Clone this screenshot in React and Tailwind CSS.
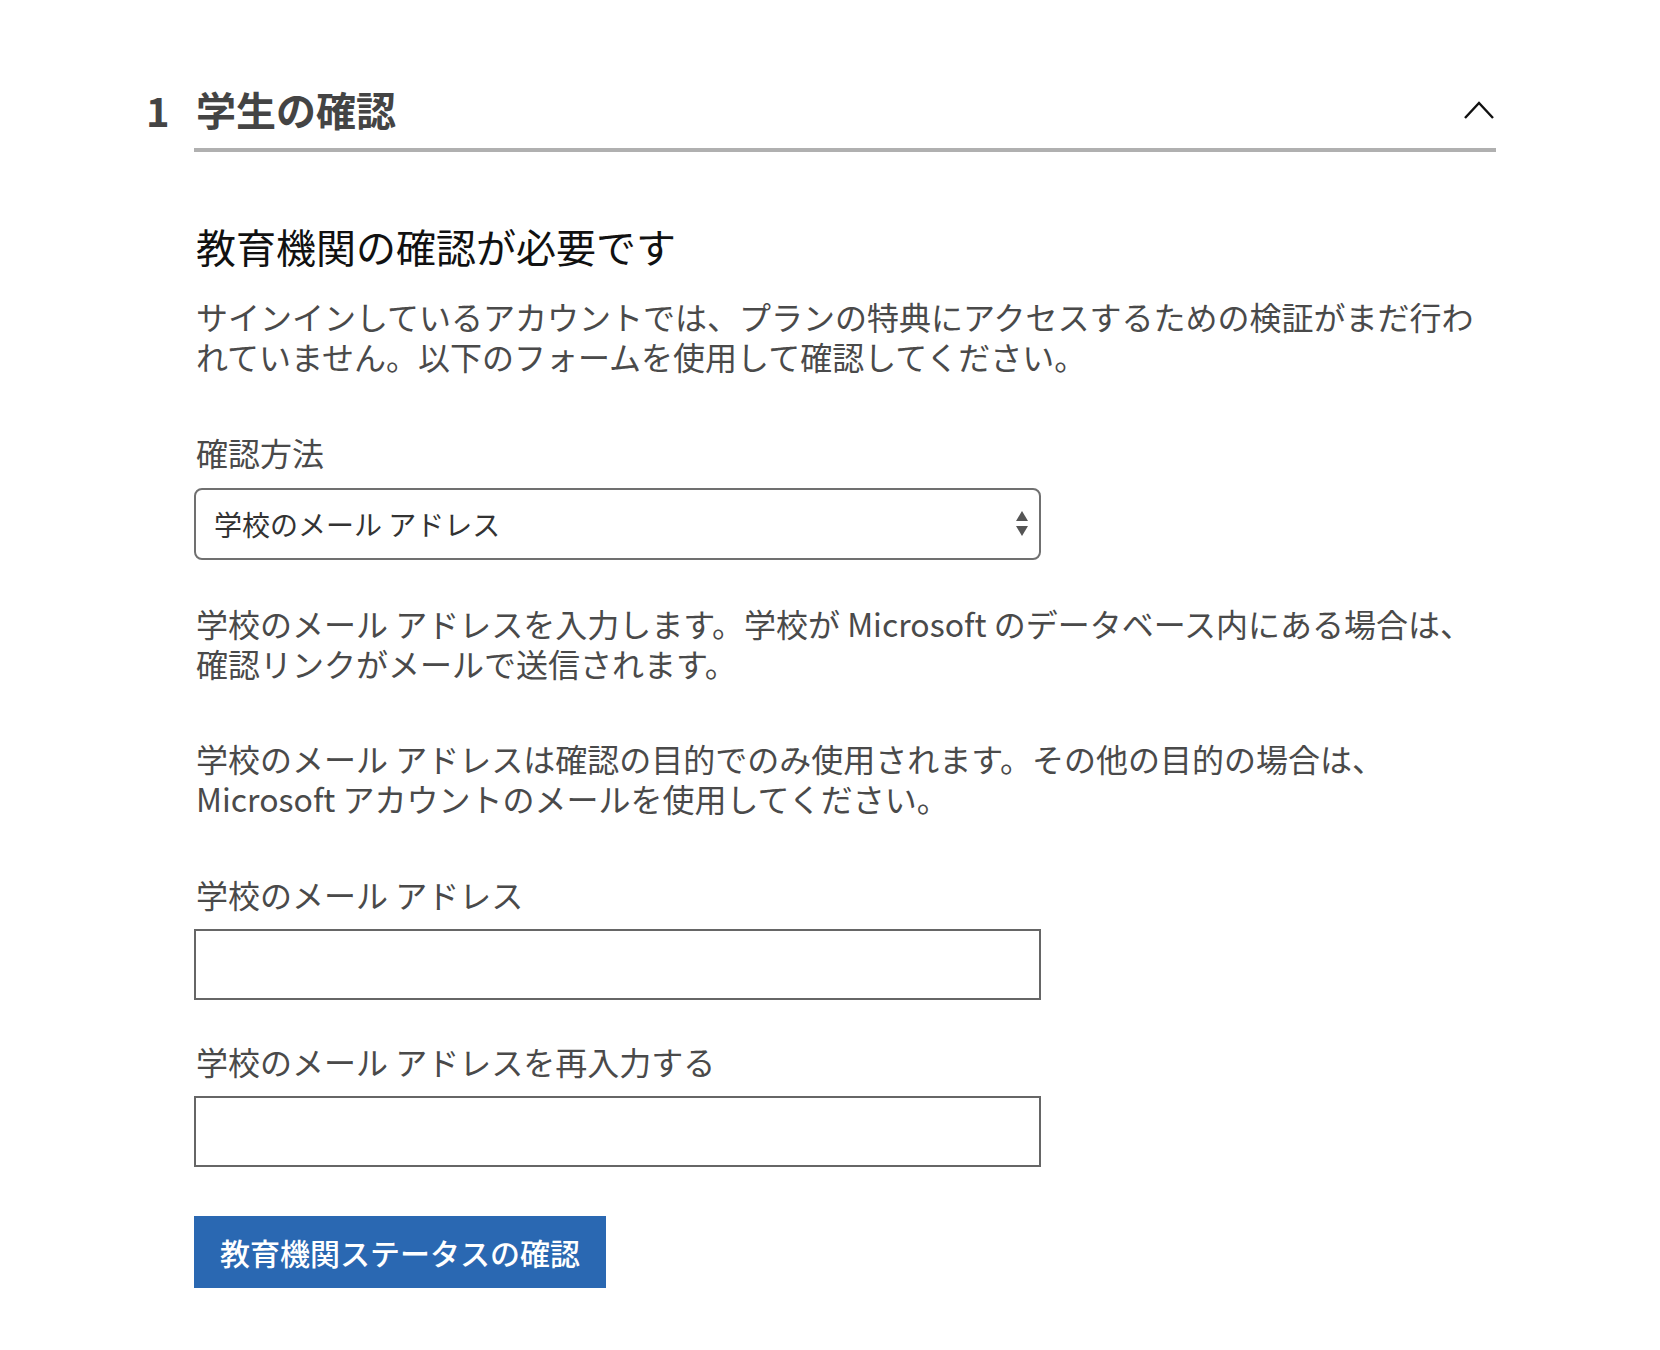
const jp = "font-['Noto_Sans_CJK_JP','Noto_Sans',sans-serif]";

const ChevronUp = () => (
  <svg width="32" height="20" viewBox="0 0 32 20" fill="none">
    <polyline points="2,18 16,3 30,18" stroke="#111" strokeWidth="2.4" />
  </svg>
);

const SelectArrows = () => (
  <svg width="14" height="26" viewBox="0 0 14 26">
    <polygon points="7,0 13,10 1,10" fill="#555" />
    <polygon points="1,15 13,15 7,25" fill="#555" />
  </svg>
);

const App = () => {
  return (
    <div className={`min-h-[1350px] w-[1660px] bg-white pl-[146px] pt-[85px] ${jp}`}>
      <div className="flex">
        <div className="w-[48px] pt-[1px] text-[40px] font-bold leading-[48px] text-[#444]">1</div>
        <div className="w-[1302px]">
          <div className="flex items-center justify-between border-b-4 border-[#b0b0b0] pb-[15px]">
            <h2 className="pl-[2px] text-[40px] font-bold leading-[48px] text-[#444]">学生の確認</h2>
            <div className="pr-[1px] pt-[2px]">
              <ChevronUp />
            </div>
          </div>

          <h3 className="mt-[70px] pl-[2px] text-[40px] font-normal leading-[48px] text-[#111]">
            教育機関の確認が必要です
          </h3>
          <p className="mt-[26px] pl-[2px] text-[32px] leading-[40px] text-[#4a4a4a]">
            サインインしているアカウントでは、プランの特典にアクセスするための検証がまだ行わ
            <br />
            れていません。以下のフォームを使用して確認してください。
          </p>

          <label className="mt-[56px] block pl-[2px] text-[32px] leading-[40px] text-[#4a4a4a]">確認方法</label>
          <div className="mt-[16px] flex h-[72px] w-[847px] items-center justify-between rounded-[8px] border-2 border-[#707070] pl-[18px] pr-[10px]">
            <span className="text-[28px] leading-[36px] text-[#333]">学校のメール アドレス</span>
            <SelectArrows />
          </div>

          <p className="mt-[43px] pl-[2px] text-[32px] leading-[40px] text-[#4a4a4a]">
            学校のメール アドレスを入力します。学校が Microsoft のデータベース内にある場合は、
            <br />
            確認リンクがメールで送信されます。
          </p>

          <p className="mt-[55px] pl-[2px] text-[32px] leading-[40px] text-[#4a4a4a]">
            学校のメール アドレスは確認の目的でのみ使用されます。その他の目的の場合は、
            <br />
            Microsoft アカウントのメールを使用してください。
          </p>

          <label className="mt-[56px] block pl-[2px] text-[32px] leading-[40px] text-[#4a4a4a]">
            学校のメール アドレス
          </label>
          <input type="text" className="mt-[15px] block h-[71px] w-[847px] border-2 border-[#666] bg-white px-4 text-[28px] outline-none" />

          <label className="mt-[41px] block pl-[2px] text-[32px] leading-[40px] text-[#4a4a4a]">
            学校のメール アドレスを再入力する
          </label>
          <input type="text" className="mt-[15px] block h-[71px] w-[847px] border-2 border-[#666] bg-white px-4 text-[28px] outline-none" />

          <button className="mt-[49px] flex h-[72px] w-[412px] items-center justify-center bg-[#2a68b2] text-[30px] font-medium leading-[40px] text-white">
            教育機関ステータスの確認
          </button>
        </div>
      </div>
    </div>
  );
};

export default App;
